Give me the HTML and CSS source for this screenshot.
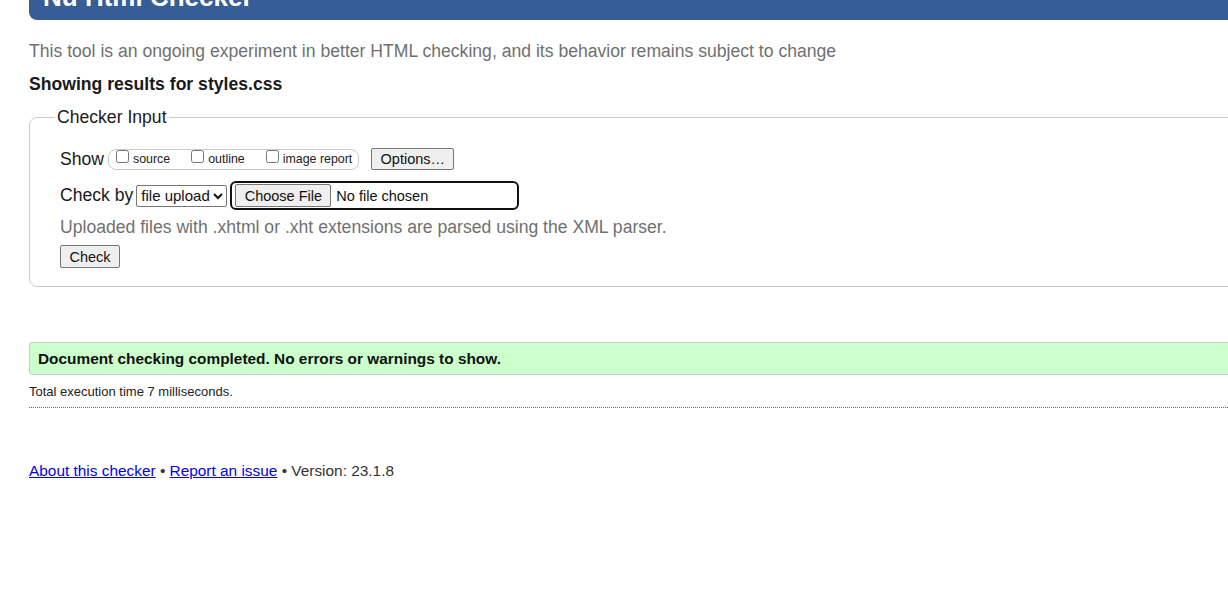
FILE: index.html
```html
<!DOCTYPE html>
<html lang="en">
<head>
<meta charset="utf-8">
<title>Nu Html Checker</title>
<link rel="stylesheet" href="styles.css">
</head>
<body>
<div class="page">
  <h1 class="title">Nu Html Checker</h1>
  <p class="intro">This tool is an ongoing experiment in better HTML checking, and its behavior remains subject to change</p>
  <p class="showing">Showing results for styles.css</p>
  <fieldset class="input-box">
    <legend class="legend">Checker Input</legend>
    <div class="row row-show">
      <span class="label">Show</span>
      <fieldset class="show-opts">
        <label class="opt"><input type="checkbox" class="cb">source</label>
        <label class="opt"><input type="checkbox" class="cb">outline</label>
        <label class="opt"><input type="checkbox" class="cb">image report</label>
      </fieldset>
      <button type="button" class="btn btn-options">Options…</button>
    </div>
    <div class="row row-check">
      <span class="label">Check by</span>
      <select class="sel"><option>file upload</option></select>
      <span class="file-wrap"><button type="button" class="btn btn-file">Choose File</button><span class="nofile">No file chosen</span></span>
    </div>
    <p class="hint">Uploaded files with .xhtml or .xht extensions are parsed using the XML parser.</p>
    <button type="button" class="btn btn-check">Check</button>
  </fieldset>
  <p class="success">Document checking completed. No errors or warnings to show.</p>
  <p class="stats">Total execution time 7 milliseconds.</p>
  <p class="footer"><a href="#" class="link">About this checker</a> • <a href="#" class="link">Report an issue</a> • Version: 23.1.8</p>
</div>
</body>
</html>
```
FILE: styles.css
```css
html { overflow: hidden; }
body {
  margin: 0;
  font-family: "Liberation Sans", Arial, sans-serif;
  color: #111;
  background: #fff;
}
.page {
  padding-left: 29px;
  margin-right: -40px;
}
.title {
  margin: -18px 0 0;
  padding: 0 14px 8px;
  background: #365d95;
  color: #fff;
  font-size: 26px;
  line-height: 30px;
  font-weight: bold;
  border-radius: 0 0 0 8px;
}
.intro {
  margin: 20px 0 0;
  font-size: 17.6px;
  line-height: 22px;
  color: #707070;
}
.showing {
  margin: 12px 0 0;
  font-size: 17.6px;
  line-height: 20px;
  font-weight: bold;
  color: #1a1a1a;
}
.input-box {
  margin: 13px 0 0;
  padding: 8px 0 18px 30px;
  border: 1px solid #cccccc;
  border-radius: 8px 0 0 8px;
  min-width: 0;
}
.legend {
  margin-left: -5px;
  padding: 0 2px;
  font-size: 17.6px;
  color: #1a1a1a;
}
.row {
  display: flex;
  align-items: center;
}
.row-show { margin-top: 12px; }
.row-check { margin-top: 11px; }
.label {
  font-size: 17.6px;
  color: #1a1a1a;
  margin-right: 4px;
  white-space: nowrap;
}
.show-opts {
  display: flex;
  align-items: flex-start;
  flex-shrink: 0;
  margin: 0 12px 0 0;
  padding: 0 6px 0 7px;
  height: 19px;
  border: 1px solid #cccccc;
  border-radius: 8px;
  min-width: 0;
}
.opt {
  display: flex;
  align-items: baseline;
  white-space: nowrap;
  font-size: 12.4px;
  line-height: 14px;
  color: #222;
  margin-right: 21px;
}
.opt:last-child { margin-right: 0; }
.cb {
  margin: 0 4px 2px 0;
  width: 13px;
  height: 13px;
}
.btn {
  font-family: "Liberation Sans", Arial, sans-serif;
  font-size: 14.5px;
  color: #111;
  background: #efefef;
  border: 1px solid #767676;
  border-radius: 2px;
  padding: 1px 6px;
  height: 22px;
  white-space: nowrap;
  flex-shrink: 0;
}
.btn-options { width: 83px; }
.sel {
  font-family: "Liberation Sans", Arial, sans-serif;
  font-size: 15px;
  height: 22px;
  width: 91px;
  padding: 0;
  margin-left: -1px;
  border: 1px solid #767676;
  border-radius: 2px;
  color: #111;
  background: #fff;
  flex-shrink: 0;
}
.file-wrap {
  display: inline-flex;
  align-items: center;
  flex-shrink: 0;
  margin-left: 3px;
  width: 282px;
  height: 25px;
  border: 2px solid #111;
  border-radius: 6px;
  padding-left: 3px;
}
.btn-file {
  width: 96px;
  height: 23px;
}
.nofile {
  font-size: 14.5px;
  margin-left: 5px;
  color: #111;
  white-space: nowrap;
}
.hint {
  margin: 6px 0 0;
  font-size: 17.6px;
  line-height: 22px;
  color: #707070;
}
.btn-check {
  margin-top: 7px;
  width: 60px;
  height: 23px;
}
.success {
  margin: 55px 0 0;
  padding: 0 8px;
  height: 31px;
  line-height: 31px;
  background: #ccffcc;
  border: 1px solid #cccccc;
  border-right: 0;
  border-radius: 4px 0 0 4px;
  font-size: 15.4px;
  font-weight: bold;
  color: #111;
}
.stats {
  margin: 9px 0 0;
  padding-bottom: 7px;
  font-size: 13px;
  line-height: 16px;
  color: #222;
  border-bottom: 1px dotted #666;
}
.footer {
  margin: 54px 0 0;
  font-size: 15.4px;
  line-height: 18px;
  color: #333;
}
.link { color: #0000ee; }
```
